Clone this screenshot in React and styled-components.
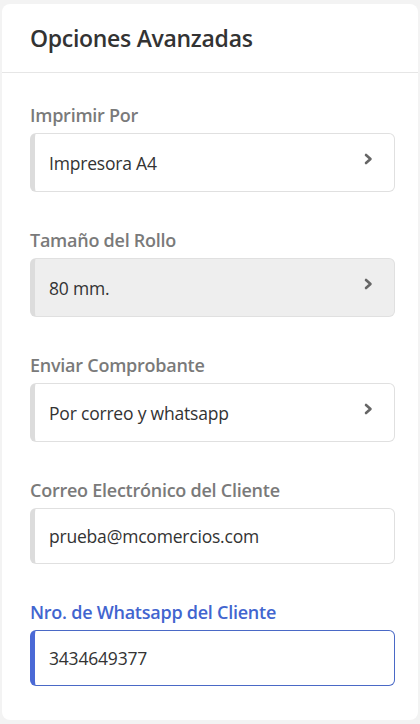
import React from 'react';
import styled, {createGlobalStyle} from 'styled-components';

const GlobalStyle = createGlobalStyle`
    html, body {
        margin: 0;
        padding: 0;
        background: #f3f3f3;
    }
    body {
        font-family: "Open Sans", "Noto Sans", Arial, sans-serif;
    }
`;

const Page = styled.div`
    padding: 4px 2px 4px 2px;
    width: 420px;
    height: 724px;
    box-sizing: border-box;
`;

const Card = styled.div`
    background: #fff;
    border-radius: 8px;
    height: 716px;
    box-sizing: border-box;
    display: flex;
    flex-direction: column;
`;

const Header = styled.div`
    height: 69px;
    box-sizing: border-box;
    border-bottom: 1px solid #e6e6e6;
    display: flex;
    align-items: center;
    padding: 0 28px;
`;

const Title = styled.h2`
    margin: 0;
    font-size: 23px;
    font-weight: 600;
    color: #333;
    letter-spacing: -0.3px;
`;

const Body = styled.div`
    padding: 31px 23px 0 28px;
    display: flex;
    flex-direction: column;
    gap: 37px;
`;

const Group = styled.div`
    display: flex;
    flex-direction: column;
    gap: 7px;
`;

const Label = styled.label`
    font-size: 18px;
    line-height: 22px;
    font-weight: 600;
    color: ${(props) => props.active ? "#4265cf" : "#7a7a7a"};
    letter-spacing: -0.25px;
`;

const Field = styled.div`
    height: ${(props) => props.h}px;
    box-sizing: border-box;
    border: 1px solid ${(props) => props.active ? "#4a69c6" : "#e0e0e0"};
    border-left: 5px solid ${(props) => props.active ? "#4a69d6" : "#dcdcdc"};
    border-radius: 6px;
    background: ${(props) => props.disabled ? "#eeeeee" : "#fff"};
    display: flex;
    align-items: center;
    justify-content: space-between;
    padding: 0 20px 0 14px;
    font-size: 17.5px;
    color: #333;
    letter-spacing: -0.2px;
`;

const Chevron = () => (
    <svg width="12" height="14" viewBox="0 0 12 14" style={{marginTop: -8}}>
        <path d="M4 3 L8.5 7 L4 11" fill="none" stroke="#666" strokeWidth="2.6" strokeLinecap="round" strokeLinejoin="round" />
    </svg>
);

const fields = [
    {label: "Imprimir Por", value: "Impresora A4", select: true, h: 59},
    {label: "Tamaño del Rollo", value: "80 mm.", select: true, disabled: true, h: 59},
    {label: "Enviar Comprobante", value: "Por correo y whatsapp", select: true, h: 59},
    {label: "Correo Electrónico del Cliente", value: "prueba@mcomercios.com", h: 56},
    {label: "Nro. de Whatsapp del Cliente", value: "3434649377", active: true, h: 56},
];

const App = () => {
    return (
        <Page>
            <GlobalStyle />
            <Card>
                <Header>
                    <Title>Opciones Avanzadas</Title>
                </Header>
                <Body>
                    {fields.map((f) => (
                        <Group key={f.label}>
                            <Label active={f.active}>{f.label}</Label>
                            <Field h={f.h} active={f.active} disabled={f.disabled}>
                                <span>{f.value}</span>
                                {f.select && <Chevron />}
                            </Field>
                        </Group>
                    ))}
                </Body>
            </Card>
        </Page>
    );
};

export default App;
